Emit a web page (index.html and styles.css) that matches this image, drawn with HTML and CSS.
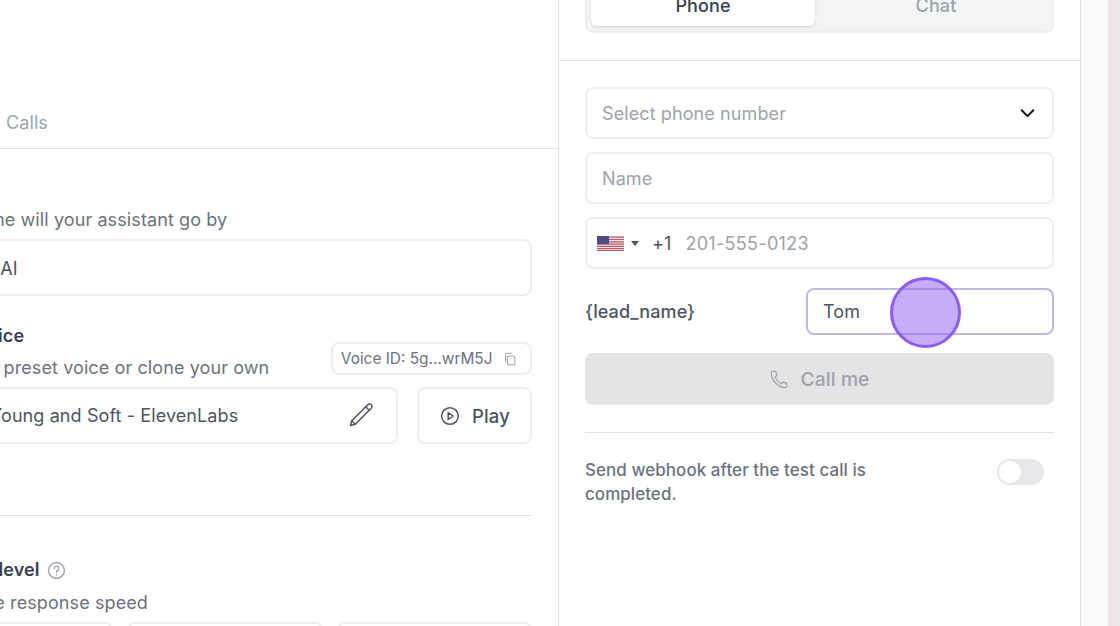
FILE: index.html
```html
<!DOCTYPE html>
<html lang="en">
<head>
    <meta charset="UTF-8">
    <title>Assistant test call</title>
    <link rel="stylesheet" href="styles.css">
</head>
<body>
    <div class="page">
        <div class="left">
            <div class="tabs-bar">
                <span class="tab-link">Calls</span>
            </div>
            <div class="form">
                <p class="desc">What name will your assistant go by</p>
                <div class="box name-box">Simple AI</div>

                <div class="voice-head">
                    <div>
                        <p class="label">Select Voice</p>
                        <p class="desc">Choose a preset voice or clone your own</p>
                    </div>
                    <div class="voice-id">
                        Voice ID: 5g...wrM5J
                        <svg class="copy-icon" viewBox="0 0 16 16" fill="none" stroke="#9ca3af" stroke-width="1.2"><rect x="5" y="4.5" width="8.5" height="10" rx="1.5"/><path d="M3 11V3a1.5 1.5 0 0 1 1.5-1.5H10"/></svg>
                    </div>
                </div>
                <div class="voice-row">
                    <div class="box voice-box">
                        <span>Aria - Young and Soft - ElevenLabs</span>
                        <svg class="pencil-icon" viewBox="0 0 24 24" fill="none" stroke="#4b5563" stroke-width="1.5" stroke-linejoin="round" stroke-linecap="round"><path d="M1.500 22.500L2.800 17.700L18.800 1.800a2.400 2.400 0 0 1 3.400 3.400L6.300 21.200z"/><path d="M16.800 3.800l3.400 3.400"/><path d="M2.800 17.700l3.500 3.500"/></svg>
                    </div>
                    <div class="box play-btn">
                        <svg class="play-icon" viewBox="0 0 24 24" fill="none" stroke="#4b5563" stroke-width="1.8" stroke-linejoin="round"><circle cx="12" cy="12" r="10"/><path d="M9.800 8l6 4-6 4z"/></svg>
                        Play
                    </div>
                </div>

                <hr class="rule">

                <p class="label latency">Latency level
                    <svg class="help-icon" viewBox="0 0 24 24" fill="none" stroke="#9ca3af" stroke-width="1.8" stroke-linecap="round"><circle cx="12" cy="12" r="10"/><path d="M9.200 9.400a2.900 2.900 0 1 1 4.400 2.500c-1 .6-1.600 1.200-1.600 2.400"/><path d="M12 17.400v.1"/></svg>
                </p>
                <p class="desc">Adjust the response speed</p>
                <div class="speed-options">
                    <div class="box"></div>
                    <div class="box"></div>
                    <div class="box"></div>
                </div>
            </div>
        </div>

        <div class="right">
            <div class="switch-wrap">
                <div class="switch">
                    <div class="switch-item active">Phone</div>
                    <div class="switch-item">Chat</div>
                </div>
            </div>
            <div class="call-form">
                <div class="box field placeholder">
                    Select phone number
                    <svg class="chevron" viewBox="0 0 16 16" fill="none" stroke="#111827" stroke-width="1.9" stroke-linecap="round" stroke-linejoin="round"><path d="M2.500 5l5.500 5.500L13.500 5"/></svg>
                </div>
                <div class="box field placeholder">Name</div>
                <div class="box field phone-field">
                    <svg class="flag" viewBox="0 0 27 15"><rect width="27" height="15" fill="#f3e6e8"/><path d="M0 1.200h27M0 3.500h27M0 5.800h27M0 8.100h27M0 10.400h27M0 12.700h27" stroke="#b8596b" stroke-width="1.200"/><rect y="14" width="27" height="1" fill="#b8596b"/><rect width="12" height="8" fill="#4c4f86"/></svg>
                    <span class="caret"></span>
                    <span class="dial">+1</span>
                    <span class="phone-hint">201-555-0123</span>
                </div>
                <div class="lead-row">
                    <span class="lead-label">{lead_name}</span>
                    <div class="lead-input">
                        Tom
                        <span class="click-mark"></span>
                    </div>
                </div>
                <div class="call-btn">
                    <svg class="phone-icon" viewBox="0 0 24 24" fill="none" stroke="#9ca3af" stroke-width="1.500" stroke-linejoin="round"><path d="M5 2.500l3 .5 1.500 4.500-2 2c1 3 4 6.500 7.500 8l2-1.800 4 1.300.5 3a2 2 0 0 1-2 2.300C10.500 22 2.500 13 2.800 4.500A2 2 0 0 1 5 2.500z"/></svg>
                    Call me
                </div>
                <hr class="rule call-rule">
                <div class="webhook-row">
                    <p class="webhook-text">Send webhook after the test call is completed.</p>
                    <div class="toggle"><span class="knob"></span></div>
                </div>
            </div>
        </div>

        <div class="gutter"></div>
        <div class="backdrop"></div>
    </div>
</body>
</html>
```

FILE: styles.css
```css
* {
    box-sizing: border-box;
}

html, body {
    margin: 0;
    height: 100%;
    overflow: hidden;
}

body {
    font-family: Inter, "Liberation Sans", sans-serif;
    font-size: 18px;
    letter-spacing: 0.1px;
    color: #4b5563;
    background-color: #fff;
}

p {
    margin: 0;
}

.page {
    display: flex;
    height: 626px;
}

.box {
    background-color: #fff;
    border: 2px solid #eceef0;
    border-radius: 8px;
}

.rule {
    border: none;
    border-top: 1px solid #dfe2e6;
    margin: 0;
}

/* left panel, cut off by the window edge */
.left {
    width: 559px;
    flex-shrink: 0;
    border-right: 1px solid #dfe2e6;
    overflow: hidden;
}

.tabs-bar {
    height: 149px;
    display: flex;
    align-items: flex-end;
    border-bottom: 1px solid #dfe2e6;
    padding: 0 0 13px 6px;
    color: #9aa5b1;
    line-height: 24px;
}

.form {
    width: 610.5px;
    margin-left: -79px;
    padding-top: 59px;
}

.label {
    font-weight: 600;
    color: #374151;
    line-height: 24px;
    white-space: nowrap;
}

.desc {
    margin-left: -3px;
    color: #6b7280;
    line-height: 24px;
    white-space: nowrap;
}

.name-box {
    height: 57px;
    margin-top: 7px;
    padding: 1px 14px 0;
    display: flex;
    align-items: center;
}

.voice-head {
    display: flex;
    justify-content: space-between;
    margin-top: 27px;
}

.voice-head .label {
    margin-left: -6px;
    padding-top: 1px;
}

.voice-head .desc {
    margin-top: 8px;
    margin-left: -4px;
}

.voice-id {
    height: 33px;
    margin-top: 19px;
    padding: 0 13px 0 8px;
    display: flex;
    align-items: center;
    gap: 10px;
    border: 2px solid #eceef0;
    border-radius: 8px;
    font-size: 15.4px;
    letter-spacing: 0;
    color: #6b7280;
    white-space: nowrap;
}

.copy-icon {
    width: 14px;
    height: 14px;
}

.voice-row {
    display: flex;
    gap: 19px;
    margin-top: 7px;
}

.voice-box {
    flex: 1;
    height: 57px;
    padding: 0 23px 1px 14px;
    display: flex;
    align-items: center;
    justify-content: space-between;
    white-space: nowrap;
}

.pencil-icon {
    width: 24px;
    height: 24px;
}

.play-btn {
    width: 115px;
    height: 57px;
    padding-left: 2px;
    display: flex;
    align-items: center;
    justify-content: center;
    gap: 12px;
    font-size: 18.5px;
    font-weight: 500;
}

.play-icon {
    width: 20px;
    height: 20px;
}

.form .rule {
    margin-top: 71px;
}

.latency {
    margin-top: 42px;
    margin-left: 3px;
    display: flex;
    align-items: center;
    gap: 7px;
}

.help-icon {
    width: 19px;
    height: 19px;
}

.latency + .desc {
    margin-top: 9px;
}

.speed-options {
    display: grid;
    grid-template-columns: 192px 196px 195px;
    gap: 14px;
    margin-top: 7px;
}

.speed-options .box {
    height: 60px;
}

/* right panel */
.right {
    width: 522px;
    flex-shrink: 0;
    border-right: 1px solid #dfe2e6;
}

.switch-wrap {
    height: 61px;
    padding: 0 26px 27px;
    display: flex;
    align-items: flex-end;
    border-bottom: 1px solid #dfe2e6;
}

.switch {
    flex: 1;
    height: 50px;
    flex-shrink: 0;
    padding: 0 4px 5px;
    display: flex;
    gap: 9px;
    background-color: #f3f4f6;
    border: 2px solid #eceef0;
    border-radius: 8px;
}

.switch-item {
    flex: 1;
    display: flex;
    align-items: center;
    justify-content: center;
    color: #9ca3af;
    font-weight: 500;
    border-radius: 6px;
}

.switch-item.active {
    background-color: #fff;
    color: #374151;
    box-shadow: 0 1px 3px rgba(0, 0, 0, 0.12);
}

.call-form {
    padding: 26px 26px 0;
    display: flex;
    flex-direction: column;
    gap: 13px;
}

.field {
    height: 52px;
    padding: 0 15px;
    display: flex;
    align-items: center;
    justify-content: space-between;
}

.placeholder {
    color: #9ca3af;
}

.chevron {
    width: 17px;
    height: 17px;
    margin-right: 1px;
}

.phone-field {
    justify-content: flex-start;
    padding-left: 10px;
}

.flag {
    width: 27px;
    height: 15px;
}

.caret {
    width: 0;
    height: 0;
    margin-left: 7px;
    border-left: 4px solid transparent;
    border-right: 4px solid transparent;
    border-top: 5px solid #4b5563;
}

.dial {
    margin-left: 13px;
    color: #4b5563;
}

.phone-hint {
    margin-left: 14px;
    letter-spacing: 0.3px;
    color: #a1a1aa;
}

.lead-row {
    display: flex;
    align-items: center;
    justify-content: space-between;
    margin-top: 6px;
}

.lead-label {
    font-weight: 500;
    color: #4b5563;
}

.lead-input {
    position: relative;
    width: 248px;
    height: 47px;
    padding: 0 15px;
    display: flex;
    align-items: center;
    border: 2px solid #c3b7e0;
    border-radius: 8px;
}

.click-mark {
    position: absolute;
    left: 82px;
    top: -13px;
    width: 71px;
    height: 71px;
    border-radius: 50%;
    background-color: rgba(139, 92, 246, 0.5);
    border: 3px solid #8b5cf6;
}

.call-btn {
    height: 52px;
    margin-top: 5px;
    display: flex;
    align-items: center;
    justify-content: center;
    gap: 11px;
    background-color: #e4e4e7;
    border-radius: 8px;
    color: #a1a1aa;
    font-weight: 500;
    font-size: 19.3px;
}

.phone-icon {
    width: 20px;
    height: 20px;
}

.call-rule {
    margin-top: 14px;
}

.webhook-row {
    display: flex;
    justify-content: space-between;
    margin-top: 12px;
    padding-right: 10px;
}

.webhook-text {
    width: 300px;
    font-size: 16.9px;
    line-height: 24px;
    color: #6b7280;
    font-weight: 500;
}

.toggle {
    width: 47px;
    height: 26px;
    margin-top: 1px;
    padding: 2px;
    background-color: #e5e7eb;
    border-radius: 13px;
}

.knob {
    display: block;
    width: 22px;
    height: 22px;
    background-color: #fff;
    border-radius: 50%;
}

/* strip beside the panels */
.gutter {
    width: 27px;
    flex-shrink: 0;
    background-color: #f9fafb;
}

.backdrop {
    flex: 1;
    background-color: #e9e5e8;
}
```
